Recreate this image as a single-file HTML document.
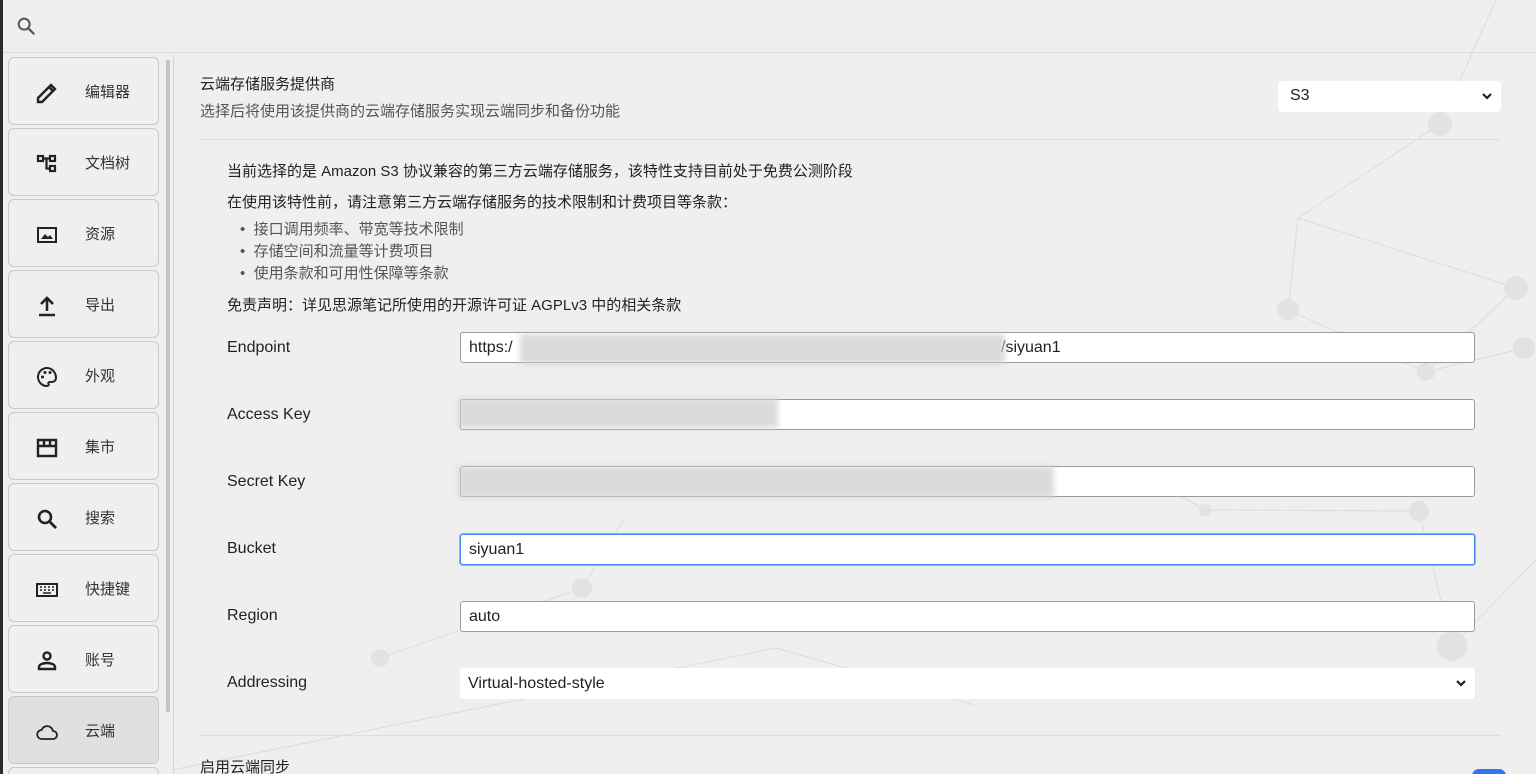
<!DOCTYPE html>
<html style="width:1536px;height:774px;overflow:hidden"><head><meta charset="utf-8"><style>
*{box-sizing:border-box;margin:0;padding:0}
body{width:1536px;height:774px;overflow:hidden;background:#efefef;font-family:"Liberation Sans","Noto Sans CJK SC",sans-serif;color:#222;position:relative}
.abs{position:absolute}
.left{left:0;top:0;width:3px;height:774px;background:#2b2b2b}
.top{left:3px;top:0;right:0;height:53px;border-bottom:1px solid #dcdcdc}
.item{position:absolute;left:8px;width:151px;height:68px;border:1px solid #c9c9c9;border-radius:6px;font-size:15px;color:#333}
.item svg{position:absolute;left:26px;top:23px}
.item span{position:absolute;left:76px;top:23px}
.t{position:absolute;font-size:15px;color:#222;white-space:nowrap}
.g{color:#555}
.inp{position:absolute;left:460px;width:1015px;height:31px;background:#fff;border:1px solid #9a9a9a;border-radius:3px;font-size:16px;padding:6px 8px}
.blur{position:absolute;background:#d2d2d2;filter:blur(3px);opacity:.8}
.chev{position:absolute;right:8px;top:10px}
</style></head><body>
<svg class="abs" style="left:0;top:0" width="1536" height="774">
<g stroke="#dcdcdc" stroke-width="1" fill="none">
<line x1="1298" y1="218" x2="1440" y2="124"/><line x1="1298" y1="218" x2="1516" y2="288"/><line x1="1298" y1="218" x2="1288" y2="310"/>
<line x1="1516" y1="288" x2="1426" y2="372"/><line x1="1288" y1="310" x2="1426" y2="372"/><line x1="1426" y1="372" x2="1524" y2="348"/>
<line x1="1127" y1="466" x2="1205" y2="510"/><line x1="1205" y1="510" x2="1419" y2="511"/><line x1="1419" y1="511" x2="1452" y2="646"/>
<line x1="625" y1="517" x2="582" y2="588"/><line x1="380" y1="658" x2="582" y2="588"/><line x1="776" y1="648" x2="975" y2="705"/>
<line x1="172" y1="770" x2="776" y2="648"/><line x1="1452" y1="646" x2="1536" y2="560"/><line x1="1496" y1="0" x2="1440" y2="124"/>
</g>
<g fill="#e2e2e2"><circle cx="1440" cy="124" r="12"/><circle cx="1516" cy="288" r="12"/><circle cx="1288" cy="310" r="11"/><circle cx="1426" cy="372" r="9"/><circle cx="1524" cy="348" r="11"/><circle cx="582" cy="588" r="10"/><circle cx="380" cy="658" r="9"/><circle cx="1419" cy="511" r="10"/><circle cx="1452" cy="646" r="15"/><circle cx="1205" cy="510" r="6"/></g>
</svg>
<div class="abs left"></div>
<div class="abs top"></div>
<svg class="abs" style="left:15px;top:15px" width="22" height="22" viewBox="0 0 24 24"><circle cx="10" cy="10" r="6" fill="none" stroke="#555" stroke-width="2.2"/><line x1="14.5" y1="14.5" x2="21" y2="21" stroke="#555" stroke-width="2.4"/></svg>
<div class="abs" style="left:166px;top:60px;width:4px;height:652px;background:#c4c4c4;border-radius:2px"></div>
<div class="abs" style="left:173px;top:54px;width:1px;height:720px;background:#d6d6d6"></div>

<div class="item" style="top:57px"><svg width="24" height="24" viewBox="0 0 24 24"><path d="M3 21v-4L16 4l4 4L7 21zM14 6l4 4" fill="none" stroke="#222" stroke-width="2.4"/></svg><span>编辑器</span></div>
<div class="item" style="top:128px"><svg width="24" height="24" viewBox="0 0 24 24"><g fill="none" stroke="#222" stroke-width="2.2"><rect x="3" y="4" width="5" height="5"/><rect x="15" y="4" width="5" height="5"/><rect x="15" y="14" width="5" height="5"/><path d="M8 6.5h7M11.5 6.5v10h3.5"/></g></svg><span>文档树</span></div>
<div class="item" style="top:199px"><svg width="24" height="24" viewBox="0 0 24 24"><rect x="3" y="5" width="18" height="14" fill="none" stroke="#222" stroke-width="2"/><path d="M6 16l4-5 3 3 2-2 3 4z" fill="#222"/></svg><span>资源</span></div>
<div class="item" style="top:270px"><svg width="24" height="24" viewBox="0 0 24 24"><path d="M12 17V5M6 10l6-6 6 6M4 21h16" fill="none" stroke="#222" stroke-width="2.6"/></svg><span>导出</span></div>
<div class="item" style="top:341px"><svg width="24" height="24" viewBox="0 0 24 24"><path d="M12 3a9 9 0 0 0 0 18c1.5 0 2-1 1.5-2s0-2 1.5-2h2a4 4 0 0 0 4-4c0-5.5-4-10-9-10z" fill="none" stroke="#222" stroke-width="2"/><circle cx="7.5" cy="12" r="1.5" fill="#222"/><circle cx="10" cy="7.5" r="1.5" fill="#222"/><circle cx="15" cy="7.5" r="1.5" fill="#222"/></svg><span>外观</span></div>
<div class="item" style="top:412px"><svg width="24" height="24" viewBox="0 0 24 24"><path d="M3 4h18v16H3zM3 10h18M9 4v6M15 4v6" fill="none" stroke="#222" stroke-width="2.4"/></svg><span>集市</span></div>
<div class="item" style="top:483px"><svg width="24" height="24" viewBox="0 0 24 24"><circle cx="10" cy="10" r="6" fill="none" stroke="#222" stroke-width="2.6"/><line x1="14.5" y1="14.5" x2="21" y2="21" stroke="#222" stroke-width="2.8"/></svg><span>搜索</span></div>
<div class="item" style="top:554px"><svg width="24" height="24" viewBox="0 0 24 24"><rect x="2" y="6" width="20" height="12" fill="none" stroke="#222" stroke-width="2"/><path d="M5 9h2M9 9h2M13 9h2M17 9h2M5 12h2M9 12h2M13 12h2M17 12h2M8 15h8" stroke="#222" stroke-width="1.6"/></svg><span>快捷键</span></div>
<div class="item" style="top:625px"><svg width="24" height="24" viewBox="0 0 24 24"><circle cx="12" cy="7" r="3.5" fill="none" stroke="#222" stroke-width="2.4"/><path d="M4 20v-2c0-2.5 4-4 8-4s8 1.5 8 4v2z" fill="none" stroke="#222" stroke-width="2.4"/></svg><span>账号</span></div>
<div class="item" style="top:696px;background:#e0e0e0"><svg width="24" height="24" viewBox="0 0 24 24"><path d="M7 19h11a4 4 0 0 0 0-8 6 6 0 0 0-11.5-1A4.5 4.5 0 0 0 7 19z" fill="none" stroke="#222" stroke-width="1.8"/></svg><span>云端</span></div>
<div class="item" style="top:767px;height:7px;border-bottom:none;border-radius:6px 6px 0 0"></div>

<div class="t" style="left:200px;top:73px">云端存储服务提供商</div>
<div class="t g" style="left:200px;top:100px">选择后将使用该提供商的云端存储服务实现云端同步和备份功能</div>
<div class="abs" style="left:1278px;top:81px;width:223px;height:31px;background:#fff;border-radius:4px;font-size:16px;padding:6px 12px">S3<svg class="chev" width="12" height="10" viewBox="0 0 12 10"><path d="M2 3l4 4 4-4" fill="none" stroke="#222" stroke-width="2.2"/></svg></div>
<div class="abs" style="left:200px;top:139px;width:1300px;height:1px;background:#dcdcdc"></div>

<div class="t" style="left:227px;top:160px">当前选择的是 Amazon S3 协议兼容的第三方云端存储服务，该特性支持目前处于免费公测阶段</div>
<div class="t" style="left:227px;top:191px">在使用该特性前，请注意第三方云端存储服务的技术限制和计费项目等条款：</div>
<div class="t g" style="left:240px;top:218px">•&nbsp;&nbsp;接口调用频率、带宽等技术限制</div>
<div class="t g" style="left:240px;top:240px">•&nbsp;&nbsp;存储空间和流量等计费项目</div>
<div class="t g" style="left:240px;top:262px">•&nbsp;&nbsp;使用条款和可用性保障等条款</div>
<div class="t" style="left:227px;top:294px">免责声明：详见思源笔记所使用的开源许可证 AGPLv3 中的相关条款</div>

<div class="t" style="left:227px;top:339px;font-size:16px">Endpoint</div>
<div class="inp" style="top:332px">https:/<span style="position:absolute;left:540px">/siyuan1</span></div>
<div class="blur" style="left:520px;top:334px;width:485px;height:30px"></div>
<div class="t" style="left:227px;top:406px;font-size:16px">Access Key</div>
<div class="inp" style="top:399px"></div>
<div class="blur" style="left:458px;top:398px;width:320px;height:30px"></div>
<div class="t" style="left:227px;top:473px;font-size:16px">Secret Key</div>
<div class="inp" style="top:466px"></div>
<div class="blur" style="left:458px;top:466px;width:596px;height:32px"></div>
<div class="t" style="left:227px;top:540px;font-size:16px">Bucket</div>
<div class="inp" style="top:534px;border-color:#4285f4;box-shadow:0 0 0 1px #8ab4f8">siyuan1</div>
<div class="t" style="left:227px;top:607px;font-size:16px">Region</div>
<div class="inp" style="top:601px">auto</div>
<div class="t" style="left:227px;top:674px;font-size:16px">Addressing</div>
<div class="inp" style="top:668px;border:none;padding-top:7px">Virtual-hosted-style<svg class="chev" width="12" height="10" viewBox="0 0 12 10"><path d="M2 3l4 4 4-4" fill="none" stroke="#222" stroke-width="2.2"/></svg></div>
<div class="abs" style="left:200px;top:735px;width:1300px;height:1px;background:#dcdcdc"></div>
<div class="t" style="left:200px;top:756px">启用云端同步</div>
<div class="abs" style="left:1472px;top:769px;width:34px;height:14px;border-radius:7px;background:#3575f0"></div>
</body></html>
